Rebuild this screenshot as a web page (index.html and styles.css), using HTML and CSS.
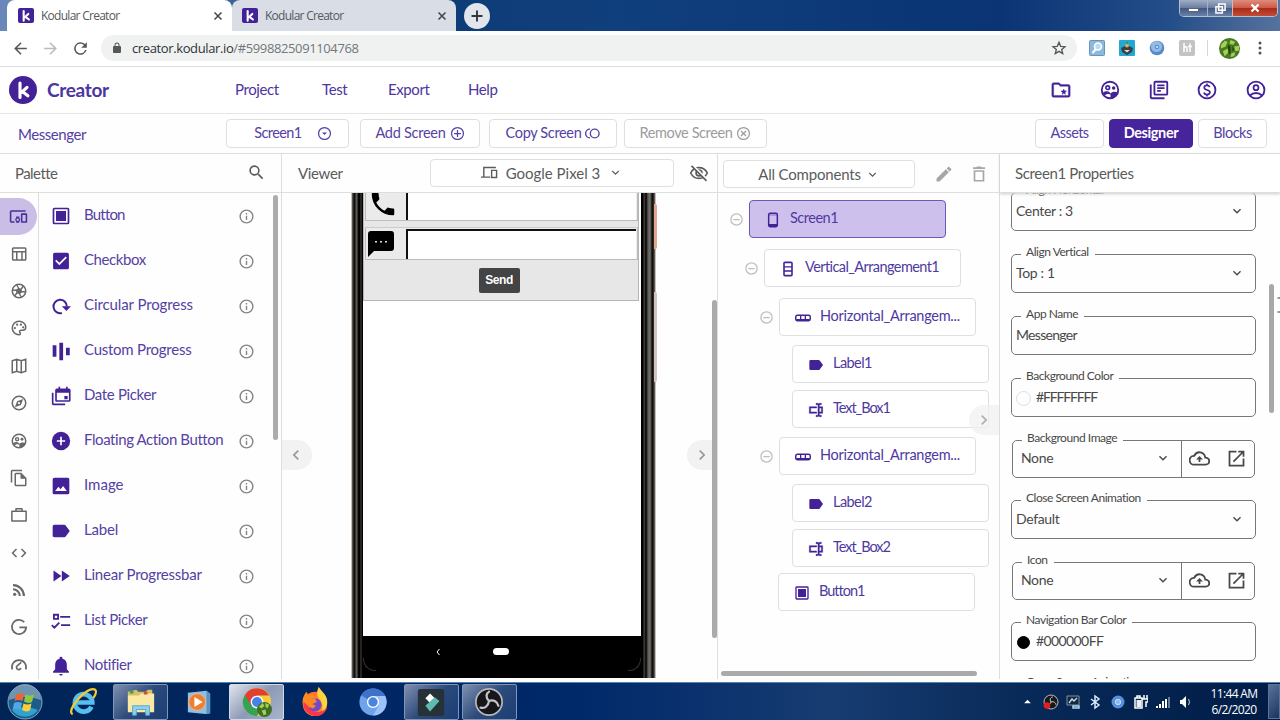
FILE: index.html
```html
<!DOCTYPE html>
<html lang="en">
<head>
<meta charset="utf-8">
<title>Kodular Creator</title>
<link rel="stylesheet" href="styles.css">
</head>
<body>
<svg class="defs" aria-hidden="true">
  <symbol id="k" viewBox="0 0 24 24"><path d="M8 3.500V20M16 8.500L10 14M11 13.500l6 4.500" fill="none" stroke="#fff" stroke-width="3.600" stroke-linecap="round"/></symbol>
  <symbol id="info" viewBox="0 0 24 24"><path d="M11 7h2v2h-2zm0 4h2v6h-2zm1-9a10 10 0 100 20 10 10 0 000-20zm0 18a8 8 0 110-16 8 8 0 010 16z"/></symbol>
  <symbol id="chev" viewBox="0 0 24 24"><path d="M7.400 8.600L12 13.200l4.600-4.600L18 10l-6 6-6-6z"/></symbol>
  <symbol id="right" viewBox="0 0 24 24"><path d="M8.600 16.600l4.600-4.600-4.600-4.600L10 6l6 6-6 6z"/></symbol>
  <symbol id="left" viewBox="0 0 24 24"><path d="M15.400 16.600L10.800 12l4.600-4.600L14 6l-6 6 6 6z"/></symbol>
  <symbol id="minus" viewBox="0 0 24 24"><path d="M7 11h10v2H7zm5-9a10 10 0 100 20 10 10 0 000-20zm0 18a8 8 0 110-16 8 8 0 010 16z"/></symbol>
  <symbol id="button" viewBox="0 0 24 24"><path d="M6 6h12v12H6z"/><rect x="3" y="3" width="18" height="18" rx="1" fill="none" stroke="currentColor" stroke-width="2"/></symbol>
  <symbol id="label" viewBox="0 0 24 24"><path d="M17.600 5.300A2 2 0 0016 4.500H4a2 2 0 00-2 2v11c0 1.100.9 2 2 2h12c.7 0 1.300-.3 1.600-.8L22.500 12z"/></symbol>
  <symbol id="textbox" viewBox="0 0 24 24"><path d="M17 7h5v10h-5v2a1 1 0 001 1h2v2h-2.500c-.5 0-1.500-.5-1.500-1 0 .5-1 1-1.500 1H12v-2h2a1 1 0 001-1V5a1 1 0 00-1-1h-2V2h2.500c.5 0 1.500.5 1.500 1 0-.5 1-1 1.500-1H20v2h-2a1 1 0 00-1 1zM2 7h11v2H4v6h9v2H2zm18 8V9h-3v6z" stroke="currentColor" stroke-width=".7"/></symbol>
  <symbol id="group" viewBox="0 0 24 24"><circle cx="12" cy="12" r="9" fill="none" stroke="currentColor" stroke-width="2"/><circle cx="9.500" cy="9.500" r="2" fill="none" stroke="currentColor" stroke-width="1.800"/><circle cx="16" cy="9.700" r="1.900"/><path d="M4 15c3-2 6-2 7.500-.5l1 1.300C14.500 13.500 18 13.500 21 15c-2 4-5 6-8.500 6v-4c-2-1.500-5-.5-6.500.8z"/></symbol>
  <symbol id="cloud" viewBox="0 0 24 24"><path d="M19.400 10A7.500 7.500 0 005.300 8 6 6 0 006 20h13a5 5 0 00.4-10zM19 18H6a4 4 0 01-.4-8h1l.5-.9A5.500 5.500 0 0117.400 10.400l.3 1.500 1.500.1A3 3 0 0119 18zM8 13h3v3h2v-3h3l-4-4z"/></symbol>
  <symbol id="open" viewBox="0 0 24 24"><path d="M19 19H5V5h7V3H3v18h18v-9h-2zM14 3v2h3.600l-9.800 9.800 1.400 1.400L19 6.400V10h2V3z"/></symbol>
  <symbol id="harr" viewBox="0 0 24 24"><rect x="1.100" y="8" width="21.800" height="8" rx="2.500" fill="none" stroke="currentColor" stroke-width="2.200"/><path d="M7.500 8h2v8h-2zM14.500 8h2v8h-2zM2 13.500h20v2H2z"/></symbol>
  <symbol id="varr" viewBox="0 0 24 24"><rect x="6" y="2" width="12" height="20" rx="1.500" fill="none" stroke="currentColor" stroke-width="2.400"/><path d="M6 7.700h12v2.200H6zM6 14h12v2.200H6z"/></symbol>
</svg>

<header class="tabs">
  <div class="tab active"><span class="klogo"><svg><use href="#k"/></svg></span><span class="tab-title">Kodular Creator</span><svg class="x" viewBox="0 0 10 10"><path d="M1.500 1.500l7 7m0-7l-7 7"/></svg></div>
  <div class="tab"><span class="klogo"><svg><use href="#k"/></svg></span><span class="tab-title">Kodular Creator</span><svg class="x" viewBox="0 0 10 10"><path d="M1.500 1.500l7 7m0-7l-7 7"/></svg></div>
  <span class="newtab"><svg viewBox="0 0 14 14"><path d="M7 1.500v11M1.500 7h11"/></svg></span>
  <div class="winctl">
    <span class="wc min"><i></i></span><span class="wc max"><svg viewBox="0 0 12 12"><path d="M4 1h7v7H4zM1 4h7v7H1z" fill="#687490" stroke="#fff" stroke-width="1.600"/></svg></span><span class="wc close"><svg viewBox="0 0 10 10"><path d="M1.500 1.500l7 7m0-7l-7 7" stroke="#fff" stroke-width="2.400"/></svg></span>
  </div>
</header>

<nav class="address">
  <svg class="nav" viewBox="0 0 24 24"><path d="M20 11H7.800l5.600-5.600L12 4l-8 8 8 8 1.400-1.400L7.800 13H20z"/></svg>
  <svg class="nav dim" viewBox="0 0 24 24"><path d="M4 11h12.200l-5.600-5.600L12 4l8 8-8 8-1.400-1.400 5.600-5.600H4z"/></svg>
  <svg class="nav" viewBox="0 0 24 24"><path d="M17.650 6.350A8 8 0 1019.730 14h-2.080A6 6 0 1112 6c1.660 0 3.140.69 4.220 1.780L13 11h7V4z"/></svg>
  <div class="url">
    <svg class="lock" viewBox="0 0 24 24"><path d="M18 8h-1V6A5 5 0 007 6v2H6a2 2 0 00-2 2v10c0 1.100.9 2 2 2h12a2 2 0 002-2V10a2 2 0 00-2-2zM9 6a3 3 0 016 0v2H9z"/></svg>
    <span class="addr">creator.kodular.io<em>/#5998825091104768</em></span>
    <svg class="star" viewBox="0 0 24 24"><path d="M12 3.500l2.500 6 6.500.5-5 4.200 1.600 6.300-5.600-3.400-5.600 3.400L8 14.200 3 10l6.500-.5z"/></svg>
  </div>
  <div class="exts">
    <svg class="ext" viewBox="0 0 16 16"><rect x=".5" y=".5" width="15" height="15" rx="1" fill="#8bb9dc" stroke="#6794b8"/><circle cx="9" cy="6.500" r="3.500" fill="#b9dcf3" stroke="#fff" stroke-width="1.600"/><path d="M6.500 9.500L3.500 13" stroke="#fff" stroke-width="2"/></svg>
    <svg class="ext" viewBox="0 0 16 16"><rect width="16" height="16" rx="1" fill="#20a9d2"/><path d="M2 8l4-2 2-4 2 4 4 2-1 4-5 3-5-3z" fill="#3b3f45"/><circle cx="8" cy="5.500" r="2" fill="#c9b36a"/><path d="M5 10h6l-3 2.500z" fill="#ddd"/></svg>
    <svg class="ext" viewBox="0 0 16 16"><circle cx="8" cy="8" r="7.300" fill="#588bca"/><circle cx="7.500" cy="6.500" r="5.500" fill="#94bae6"/><circle cx="8" cy="7" r="2.300" fill="#5d90cf"/><circle cx="8" cy="7" r="1.100" fill="#d7e8fa"/></svg>
    <svg class="ext" viewBox="0 0 16 16"><rect width="16" height="16" rx="2" fill="#c3c3c3"/><path d="M5 3v9M5 7.500q3-2 3 1V12M11 3.500V12M9 6.500h4" fill="none" stroke="#fff" stroke-width="1.500"/></svg>
  </div>
  <i class="sep"></i>
  <svg class="avatar" viewBox="0 0 22 22"><circle cx="11" cy="11" r="11" fill="#477b20"/><path d="M2 7l4-4 3 1-2 5-5 2zM12 2l5 2-2 3-4-1zM16 9l5-1v5l-4 1zM4 14l5-3 1 4-4 4zM13 16l4-1-1 4-4 1z" fill="#a6ce58"/><path d="M9 7l3 2v8l-2-1zM14 8l2 4-2 2z" fill="#24460e"/></svg>
  <svg class="dots" viewBox="0 0 4 14"><circle cx="2" cy="2" r="1.500"/><circle cx="2" cy="7" r="1.500"/><circle cx="2" cy="12" r="1.500"/></svg>
</nav>

<header class="app">
  <span class="logo"><svg><use href="#k"/></svg></span>
  <h1>Creator</h1>
  <div class="menu"><a class="m1">Project</a><a class="m2">Test</a><a class="m3">Export</a><a>Help</a></div>
  <div class="appicons">
    <svg viewBox="0 0 24 24"><path d="M20 6h-8l-2-2H4a2 2 0 00-2 2v12c0 1.100.9 2 2 2h16a2 2 0 002-2V8a2 2 0 00-2-2zm0 12H4V6h5.200l2 2H20zm-6.900-1.200L15 15.600l1.900 1.200-.5-2.200 1.700-1.500-2.200-.2L15 11l-.9 1.900-2.200.2 1.700 1.500z" stroke="currentColor" stroke-width=".4"/></svg>
    <svg><use href="#group"/></svg>
    <svg viewBox="0 0 24 24"><path d="M4 6H2v14c0 1.100.9 2 2 2h14v-2H4zm16-4H8a2 2 0 00-2 2v12c0 1.100.9 2 2 2h12a2 2 0 002-2V4a2 2 0 00-2-2zm0 14H8V4h12zM10 9h8v2h-8zm0 3h4v2h-4zm0-6h8v2h-8z"/></svg>
    <svg viewBox="0 0 24 24"><circle cx="12" cy="12" r="9.200" fill="none" stroke="currentColor" stroke-width="2"/><path d="M15 8.800C14.500 7.600 13.400 7 12 7c-1.800 0-3 .9-3 2.300 0 3.600 6.200 1.700 6.200 5.200 0 1.500-1.300 2.500-3.200 2.500-1.700 0-3-.8-3.300-2.300M12 5v2m0 10v2" fill="none" stroke="currentColor" stroke-width="1.800"/></svg>
    <svg viewBox="0 0 24 24"><circle cx="12" cy="12" r="9.200" fill="none" stroke="currentColor" stroke-width="2"/><circle cx="12" cy="9.500" r="2.700" fill="none" stroke="currentColor" stroke-width="1.900"/><path d="M5.500 18c3.500-3.600 9.500-3.600 13 0" fill="none" stroke="currentColor" stroke-width="2"/></svg>
  </div>
</header>

<section class="toolbar">
  <span class="project">Messenger</span>
  <button class="btn b1">Screen1<svg viewBox="0 0 24 24"><circle cx="12" cy="12" r="9.500" fill="none" stroke="currentColor" stroke-width="2"/><path d="M8 10.500h8l-4 4z"/></svg></button>
  <button class="btn b2">Add Screen<svg viewBox="0 0 24 24"><path d="M12 6.500v11M6.500 12h11" stroke="currentColor" stroke-width="2"/><circle cx="12" cy="12" r="9.500" fill="none" stroke="currentColor" stroke-width="2"/></svg></button>
  <button class="btn b3">Copy Screen<svg viewBox="0 0 24 24"><circle cx="15.500" cy="12" r="7" fill="none" stroke="currentColor" stroke-width="2.200"/><path d="M8 5a7 7 0 000 14" fill="none" stroke="currentColor" stroke-width="2.200"/></svg></button>
  <button class="btn b4">Remove Screen<svg viewBox="0 0 24 24"><path d="M8 8l8 8m0-8l-8 8" stroke="currentColor" stroke-width="2"/><circle cx="12" cy="12" r="9.500" fill="none" stroke="currentColor" stroke-width="2"/></svg></button>
  <div class="modes"><button class="btn b5">Assets</button><button class="btn b6">Designer</button><button class="btn b7">Blocks</button></div>
</section>

<main>
  <section class="col palette">
    <div class="colhead"><span class="t-pal">Palette</span><svg class="search" viewBox="0 0 24 24"><path d="M15.500 14h-.8l-.3-.3a6.500 6.500 0 10-.7.7l.3.3v.8l5 5 1.500-1.500zm-6 0a4.500 4.500 0 110-9 4.500 4.500 0 010 9z"/></svg></div>
    <div class="colbody">
      <div class="rail">
        <span class="on"><svg viewBox="0 0 24 24"><path d="M3 6h18V4H3a2 2 0 00-2 2v12c0 1.100.9 2 2 2h4v-2H3zm10 6H9v1.800a3 3 0 000 4.400V20h4v-1.800a3 3 0 000-4.400zm-2 5.500a1.500 1.500 0 110-3 1.500 1.500 0 010 3zM22 8h-6c-.5 0-1 .5-1 1v10c0 .5.5 1 1 1h6c.5 0 1-.5 1-1V9c0-.5-.5-1-1-1zm-1 10h-4v-8h4z"/></svg></span>
        <span><svg viewBox="0 0 24 24"><path d="M20 3H4.500A2 2 0 002.500 5v14c0 1.100.9 2 2 2H20a2 2 0 002-2V5a2 2 0 00-2-2zm0 2v3H4.500V5zm-5 14h-5v-9h5zM4.500 10H8v9H4.500zM17 19v-9h3v9z"/></svg></span>
        <span><svg viewBox="0 0 24 24"><circle cx="12" cy="12" r="9" fill="none" stroke="currentColor" stroke-width="2"/><path d="M9 4l4 7M18 5l-5 7M21 13h-8M15 20l-4-7M6 19l5-7M3 11h8" stroke="currentColor" stroke-width="1.800"/><circle cx="12" cy="12" r="3.800"/></svg></span>
        <span><svg viewBox="0 0 24 24"><path d="M12 3a9 9 0 000 18c2 0 2.200-1.700 1.400-2.700C12 16.500 13 15 15 15h2a4 4 0 004-4c0-4.500-4-8-9-8z" fill="none" stroke="currentColor" stroke-width="2"/><circle cx="6.500" cy="12" r="1.500"/><circle cx="9.500" cy="7.500" r="1.500"/><circle cx="14.500" cy="7.500" r="1.500"/><circle cx="17.500" cy="11" r="1.500"/></svg></span>
        <span><svg viewBox="0 0 24 24"><path d="M3 5l6-2 6 2 6-2v16l-6 2-6-2-6 2zM9 3v16m6-14v16" fill="none" stroke="currentColor" stroke-width="2"/></svg></span>
        <span><svg viewBox="0 0 24 24"><circle cx="12" cy="12" r="9" fill="none" stroke="currentColor" stroke-width="2"/><path d="M17.500 6.500l-3 8-8 3 3-8zM12 10.500a1.500 1.500 0 100 3 1.500 1.500 0 000-3z" fill-rule="evenodd"/></svg></span>
        <span><svg><use href="#group"/></svg></span>
        <span><svg viewBox="0 0 24 24"><path d="M16 1H3a2 2 0 00-2 2v15h2V3h13zM15 5H8a2 2 0 00-2 2v14c0 1.100.9 2 2 2h12a2 2 0 002-2V12zm5 16H8V7h6v6h6z"/></svg></span>
        <span><svg viewBox="0 0 24 24"><path d="M2.500 7h19v13h-19zM8 7V3.500h8V7" fill="none" stroke="currentColor" stroke-width="2" stroke-linejoin="round"/></svg></span>
        <span><svg viewBox="0 0 24 24"><path d="M9.400 16.600L4.800 12l4.600-4.600L8 6l-6 6 6 6zm5.200 0l4.600-4.600-4.600-4.600L16 6l6 6-6 6z"/></svg></span>
        <span><svg viewBox="0 0 24 24"><circle cx="6.200" cy="17.800" r="2.200"/><path d="M4 5.500A14.500 14.500 0 0118.500 20M4 11a9 9 0 019 9" fill="none" stroke="currentColor" stroke-width="2.800"/></svg></span>
        <span><svg viewBox="0 0 24 24"><path d="M19 5.500A9.500 9.500 0 1021.500 12.500h-9" fill="none" stroke="currentColor" stroke-width="2.300"/></svg></span>
        <span><svg viewBox="0 0 24 24"><path d="M3 18A9.500 9.500 0 1121 18M15 8.500L9.500 13a3 3 0 105 3" fill="none" stroke="currentColor" stroke-width="2.200"/></svg></span>
      </div>
      <div class="items">
        <div class="item"><svg class="ic"><use href="#button"/></svg><span class="p1">Button</span><svg class="inf"><use href="#info"/></svg></div>
        <div class="item"><svg class="ic" viewBox="0 0 24 24"><path d="M19.500 2h-15A2 2 0 002.500 4v16c0 1.100.9 2 2 2h15a2 2 0 002-2V4a2 2 0 00-2-2zM10 17l-5-5 1.400-1.400L10 14.200l7.600-7.600L19 8z"/></svg><span class="p2">Checkbox</span><svg class="inf"><use href="#info"/></svg></div>
        <div class="item"><svg class="ic" viewBox="0 0 24 24"><path d="M13 20.300a8 8 0 116-7.800" fill="none" stroke="currentColor" stroke-width="2.400"/><path d="M13 12.300h11L18.500 18z"/></svg><span class="p3">Circular Progress</span><svg class="inf"><use href="#info"/></svg></div>
        <div class="item"><svg class="ic" viewBox="0 0 24 24"><path d="M2 5h4.500v14H2zM10 2h4.500v21H10zM18 8h4.500v9H18z"/></svg><span class="p4">Custom Progress</span><svg class="inf"><use href="#info"/></svg></div>
        <div class="item"><svg class="ic big" viewBox="0 0 24 24"><path d="M21.500 3H20V1h-2v2h-7V1H9v2H7a2 2 0 00-2 2v12c0 1.100.9 2 2 2h14.500a2 2 0 002-2V5a2 2 0 00-2-2zm0 14H7V8h14.500zM16 12h4v4h-4zM3 8H1v13c0 1.100.9 2 2 2h14v-2H3z"/></svg><span class="p5">Date Picker</span><svg class="inf"><use href="#info"/></svg></div>
        <div class="item"><svg class="ic" viewBox="0 0 24 24"><path d="M12 1a11 11 0 100 22 11 11 0 000-22zm5 12h-4v4h-2v-4H7v-2h4V7h2v4h4z"/></svg><span class="p6">Floating Action Button</span><svg class="inf"><use href="#info"/></svg></div>
        <div class="item"><svg class="ic" viewBox="0 0 24 24"><path d="M22 20V4a2 2 0 00-2-2H4a2 2 0 00-2 2v16c0 1.100.9 2 2 2h16a2 2 0 002-2zM9 13l2.500 3 3-4 4.500 6H5z"/></svg><span class="p7">Image</span><svg class="inf"><use href="#info"/></svg></div>
        <div class="item"><svg class="ic"><use href="#label"/></svg><span class="p8">Label</span><svg class="inf"><use href="#info"/></svg></div>
        <div class="item"><svg class="ic" viewBox="0 0 24 24"><path d="M3 5.500l9.500 6.500L3 18.500zM13 5.500l9.500 6.500-9.500 6.500z"/></svg><span class="p9">Linear Progressbar</span><svg class="inf"><use href="#info"/></svg></div>
        <div class="item"><svg class="ic" viewBox="0 0 24 24"><path d="M3.500 4.500h5v5h-5zM11 7h12M12 17h11M1 17l3 3 6-6" fill="none" stroke="currentColor" stroke-width="2.200"/></svg><span class="p10">List Picker</span><svg class="inf"><use href="#info"/></svg></div>
        <div class="item"><svg class="ic" viewBox="0 0 24 24"><path d="M12 23.500c1.100 0 2-.9 2-2h-4c0 1.100.9 2 2 2zM19 16v-6c0-3.500-2-6-5.300-6.800V2.500a1.700 1.700 0 00-3.400 0v.7C7 4 5 6.500 5 10v6l-2.500 2.500V20h19v-1.500z"/></svg><span class="p11">Notifier</span><svg class="inf"><use href="#info"/></svg></div>
      </div>
      <i class="sb"></i>
    </div>
  </section>

  <section class="col viewer">
    <div class="colhead"><span class="t-view">Viewer</span>
      <div class="select device"><svg class="dev" viewBox="0 0 24 24"><path d="M4 18V5h17M0 18.500h13M15 9h7v10h-7z" fill="none" stroke="currentColor" stroke-width="2"/></svg><span>Google Pixel 3</span><svg class="cv"><use href="#chev"/></svg></div>
      <svg class="eye" viewBox="0 0 24 24"><path d="M2 12c2-4 6-6.500 10-6.500S20 8 22 12c-2 4-6 6.500-10 6.500S4 16 2 12z" fill="none" stroke="currentColor" stroke-width="2"/><circle cx="12" cy="12" r="3.500" fill="none" stroke="currentColor" stroke-width="2"/><path d="M4 2.500l18 18" stroke="#fff" stroke-width="3"/><path d="M3 3.500l18 18" stroke="currentColor" stroke-width="2"/></svg>
    </div>
    <div class="stage">
      <div class="phone">
        <div class="display">
          <div class="form">
            <div class="hrow first"><svg class="call" viewBox="0 0 24 24"><path d="M6.600 10.800a15 15 0 006.600 6.600l2.200-2.200c.3-.3.7-.4 1-.2 1.100.4 2.300.6 3.600.6.600 0 1 .4 1 1V20c0 .6-.4 1-1 1A17 17 0 013 4c0-.6.4-1 1-1h3.500c.6 0 1 .4 1 1 0 1.200.2 2.400.6 3.600.1.300 0 .7-.3 1z"/></svg><div class="tb"></div></div>
            <div class="hrow second"><svg class="sms" viewBox="0 0 26 26"><path d="M3 0h20a3 3 0 013 3v14a3 3 0 01-3 3H6l-6 6V3a3 3 0 013-3z"/><path d="M7 10h2v1.500H7zM12 10h2v1.500h-2zM17 10h2v1.500h-2z" fill="#ddd"/></svg><div class="tb"></div></div>
            <span class="send">Send</span>
          </div>
          <div class="softnav"><svg viewBox="0 0 6 8"><path d="M4.500 1L2 4l2.500 3" fill="none" stroke="#fff"/></svg><i></i></div>
        </div>
      </div>
      <i class="power"></i><i class="volume"></i>
      <span class="handle hl"><svg><use href="#left"/></svg></span>
      <span class="handle hr"><svg><use href="#right"/></svg></span>
      <i class="vsb"></i>
    </div>
  </section>

  <section class="col tree">
    <div class="colhead"><div class="select comps"><span>All Components</span><svg class="cv"><use href="#chev"/></svg></div>
      <svg class="pen" viewBox="0 0 24 24"><path d="M2 18v4h4L18.500 9.500l-4-4zM4.500 19.500L14 10M21.500 6.500a1 1 0 000-1.400l-2.600-2.600a1 1 0 00-1.400 0l-2 2 4 4z"/></svg>
      <svg class="bin" viewBox="0 0 24 24"><path d="M6 8h12v13H6z" fill="none" stroke="currentColor" stroke-width="2.200"/><path d="M4 3h4.500l1-1h5l1 1H20v2.200H4z"/></svg></div>
    <div class="nodes">
      <div class="node n1"><svg class="tg"><use href="#minus"/></svg><div class="box sel"><svg viewBox="0 0 24 24"><rect x="5.500" y="2" width="13" height="20" rx="2" fill="none" stroke="currentColor" stroke-width="2.200"/><path d="M6 4h12v1H6zM6 18h12v4H6z"/></svg><span class="sc">Screen1</span></div></div>
      <div class="node n2"><svg class="tg"><use href="#minus"/></svg><div class="box"><svg><use href="#varr"/></svg><span class="va">Vertical_Arrangement1</span></div></div>
      <div class="node n3"><svg class="tg"><use href="#minus"/></svg><div class="box"><svg><use href="#harr"/></svg><span class="ha">Horizontal_Arrangem...</span></div></div>
      <div class="node n4"><div class="box"><svg><use href="#label"/></svg><span class="lb">Label1</span></div></div>
      <div class="node n5"><div class="box"><svg><use href="#textbox"/></svg><span class="tx">Text_Box1</span></div></div>
      <div class="node n6"><svg class="tg"><use href="#minus"/></svg><div class="box"><svg><use href="#harr"/></svg><span class="ha">Horizontal_Arrangem...</span></div></div>
      <div class="node n7"><div class="box"><svg><use href="#label"/></svg><span class="lb">Label2</span></div></div>
      <div class="node n8"><div class="box"><svg><use href="#textbox"/></svg><span class="tx">Text_Box2</span></div></div>
      <div class="node n9"><div class="box"><svg><use href="#button"/></svg><span class="bt">Button1</span></div></div>
      <i class="hsb"></i>
      <span class="handle ht"><svg><use href="#right"/></svg></span>
    </div>
  </section>

  <section class="col props">
    <div class="colhead"><span class="t-props">Screen1 Properties</span></div>
    <div class="fields">
      <fieldset><legend>Align Horizontal</legend><div class="val"><span>Center : 3</span><svg><use href="#chev"/></svg></div></fieldset>
      <fieldset><legend>Align Vertical</legend><div class="val"><span>Top : 1</span><svg><use href="#chev"/></svg></div></fieldset>
      <fieldset><legend>App Name</legend><div class="val"><span class="name">Messenger</span></div></fieldset>
      <fieldset><legend>Background Color</legend><div class="val"><i class="sw"></i><span class="hexf">#FFFFFFFF</span></div></fieldset>
      <fieldset class="asset"><legend>Background Image</legend><div class="val"><span>None</span><svg><use href="#chev"/></svg><div class="acts"><svg><use href="#cloud"/></svg><svg><use href="#open"/></svg></div></div></fieldset>
      <fieldset><legend>Close Screen Animation</legend><div class="val"><span>Default</span><svg><use href="#chev"/></svg></div></fieldset>
      <fieldset class="asset"><legend>Icon</legend><div class="val"><span>None</span><svg><use href="#chev"/></svg><div class="acts"><svg><use href="#cloud"/></svg><svg><use href="#open"/></svg></div></div></fieldset>
      <fieldset><legend>Navigation Bar Color</legend><div class="val"><i class="sw dark"></i><span class="hex0">#000000FF</span></div></fieldset>
      <fieldset class="last"><legend>Open Screen Animation</legend><div class="val"></div></fieldset>
      <i class="psb"></i>
      <svg class="cursor" viewBox="0 0 6 16"><path d="M3.500 1H6M3.500 15H6" stroke="#333"/></svg>
    </div>
  </section>
</main>

<footer class="taskbar">
  <svg class="start" viewBox="0 0 36 36"><circle cx="18" cy="18" r="17" fill="#1d5c8a" stroke="#7fa9c7"/><path d="M2 16a16 16 0 0132 0q-16-6-32 0z" fill="#88a7bd" opacity=".75"/><path d="M5 26a16 16 0 0026 0q-13-6-26 0z" fill="#35b5df" opacity=".8"/><path d="M9 11q4-3 8-1l-1.500 7q-4-2-8 0z" fill="#ee6534"/><path d="M18.500 10.500q4 2 8.500 0l-2 7.500q-4 2-8-.5z" fill="#91c83e"/><path d="M7 19q4-2 8 0l-1.500 7q-4-2-8 0z" fill="#4fa6ea"/><path d="M16.500 19.500q4 2 8 0l-1.500 7q-4 2-8-.5z" fill="#fccc3a"/></svg>
  <span class="task ie"><svg viewBox="0 0 32 32"><path d="M25 21a9.300 9.300 0 11.900-4.500H9" fill="none" stroke="#56bfee" stroke-width="5"/><path d="M5 29C-3 26 20-2 29 3c2 2 0 6-2 9" fill="none" stroke="#f1cb35" stroke-width="2.400"/></svg></span>
  <span class="task open explorer"><svg viewBox="0 0 32 32"><path d="M2 5l9-2 2 2h8l2-2h5v22H2z" fill="#d9bd67"/><path d="M2 9h12l2-2h14v20H2z" fill="#fae9a5"/><path d="M4 4h4v3H4z" fill="#3aa655"/><path d="M19 5h4v3h-4z" fill="#d05030"/><path d="M7 30V20h18v10h-4v-6H11v6z" fill="#8fd0ee" stroke="#5aa6cf"/></svg></span>
  <span class="task"><svg class="sm" viewBox="0 0 28 28"><path d="M2 4l20-2 4 3v21l-5 1-19-2z" fill="#8fc0e3"/><path d="M22 2l4 3v21l-4 1z" fill="#5a94c3"/><circle cx="12" cy="14" r="9" fill="#ef7f2d" stroke="#f3b487"/><path d="M9 8.500l9 5.500-9 5.500z" fill="#fff"/></svg></span>
  <span class="task cur"><svg viewBox="0 0 32 32"><circle cx="16" cy="16" r="15" fill="#f9cc3a"/><path d="M3 8.500A15 15 0 0016 31l6-11-6-4z" fill="#34a356"/><path d="M3 8.500L10 20l6-11h13A15 15 0 003 8.500z" fill="#df4032"/><circle cx="16" cy="16" r="6.800" fill="#fff"/><circle cx="16" cy="16" r="5.300" fill="#4384ec"/><circle cx="24" cy="24" r="8" fill="#406f24"/><path d="M18 21l4-4 2 3-3 3zM25 17l4 2-2 4-2-2zM21 25l4-1 1 5-3 1z" fill="#a4ce5b"/></svg></span>
  <span class="task"><svg viewBox="0 0 32 32"><circle cx="16" cy="18" r="13" fill="#ff7139"/><path d="M3 18C2 12 5 7 7 5l2 4 5-2 2 5 4-12c2 4 8 7 9 15 0 9-6 16-13 16S4 26 3 18z" fill="#ff8a20"/><path d="M20 0c3 6 9 8 9 16 0 6-3 9-6 11 2-6 1-11-3-15-2-4-2-8 0-12z" fill="#ffd43e"/><path d="M4 16c-2 6 4 15 13 15 6 0 10-4 12-9-5 5-10 5-14 4z" fill="#fb364c"/><circle cx="16" cy="19" r="7" fill="#7548cb"/><path d="M8 14l8-2 2 4-5 2 4 2-3 3-5-2z" fill="#ff8a20"/></svg></span>
  <span class="task"><svg viewBox="0 0 32 32"><circle cx="16" cy="16" r="14.500" fill="#6ea4ed"/><path d="M16 16L3.500 9A14.500 14.500 0 0129 9.500H16z" fill="#3f73cb"/><path d="M16 30.500A14.500 14.500 0 0029 9.500H18L22 20z" fill="#9cc2f8"/><circle cx="16" cy="16" r="6.500" fill="#fff"/><circle cx="16" cy="16" r="5" fill="#4c83dc"/></svg></span>
  <span class="task open film"><svg viewBox="0 0 32 32"><rect x="2" y="2" width="28" height="29" rx="3" fill="#263238"/><path d="M15 7l5 5-5 5-5-5z" fill="#fff"/><path d="M10 20l10-9 5 4-10 11z" fill="#5ebbb0"/></svg></span>
  <span class="task open obs"><svg viewBox="0 0 32 32"><circle cx="16" cy="16" r="14" fill="#17171b" stroke="#b8b8bd" stroke-width="1.800"/><path d="M16 15C12 11 13 7 16 5M16 15c5-2 9 1 10 5M16 15c-1 6-5 8-9 7" fill="none" stroke="#c4c4ca" stroke-width="2.400" stroke-linecap="round"/></svg></span>
  <div class="tray">
    <svg class="up" viewBox="0 0 8 6"><path d="M4 1l4 4H0z" fill="#fff"/></svg>
    <svg viewBox="0 0 16 16"><circle cx="8" cy="8" r="7" fill="#18181a" stroke="#bbb"/><path d="M8 8c-2-3 0-5 2-5M8 8c3-1 5 1 5 3M8 8c-1 3-3 3-5 2" fill="none" stroke="#ccc"/><circle cx="4" cy="11.500" r="3.300" fill="#e11e20"/></svg>
    <svg viewBox="0 0 16 16"><path d="M2 2h12v9H2z" fill="#182639" stroke="#7e91a8"/><path d="M4 9l3-4 2 2 3-3M8 12h6v2H8z" fill="none" stroke="#b5d7ee" stroke-width="1.500"/></svg>
    <svg viewBox="0 0 16 16"><path d="M4 5l8 6-4 3V2l4 3-8 6" fill="none" stroke="#d9ecff" stroke-width="1.500"/></svg>
    <svg viewBox="0 0 16 16"><circle cx="8" cy="8" r="6.500" fill="#5790dc"/><circle cx="8" cy="8" r="2.700" fill="#8fbaf0" stroke="#c7ddf7"/></svg>
    <svg viewBox="0 0 16 16"><path d="M3 4h7v10H3zM5 2h3v2H5zM12 1v4m3-4v4m-5 0h6v3h-2v5" fill="none" stroke="#fff" stroke-width="1.500"/><path d="M4.500 6H9v7H4.500z" fill="#eee"/></svg>
    <svg viewBox="0 0 16 16"><path d="M1 12h2v2H1zM4 10h2v4H4zM7 7h2v7H7zM10 5h2v9h-2z" fill="#fff"/><path d="M13 3h2v11h-2z" fill="#667995"/></svg>
    <svg class="vol" viewBox="0 0 16 16"><path d="M3 6h2l4-4v12l-4-4H3z" fill="#fff"/><path d="M11.500 5q2 3 0 6" fill="none" stroke="#ccd"/></svg>
  </div>
  <div class="clock"><span>11:44 AM</span><span class="date">6/2/2020</span></div>
  <i class="showdesk"></i>
</footer>
</body>
</html>
```
FILE: styles.css
```css
* { box-sizing: border-box; }
body { margin: 0; width: 1280px; height: 720px; overflow: hidden; display: flex; flex-direction: column; background: #fefefe; font: 15px/20px Lato, sans-serif; color: #5b5b5b; }
svg { display: block; fill: currentColor; flex: none; }
.defs { position: absolute; width: 0; height: 0; }
button { font: inherit; margin: 0; padding: 0; }

.tabs { height: 31px; flex: none; display: flex; padding-left: 7px; background: linear-gradient(90deg, #6988b9 0, #6988b9 20px, #0e3c77 450px, #103f7d 620px, #0a3474 1000px, #244e89 1170px, #56729e 1280px); }
.tab { width: 225px; height: 31px; display: flex; align-items: center; padding-left: 11px; background: #d9dde6; border-radius: 8px 8px 0 0; }
.tab + .tab { width: 224px; padding-left: 10px; }
.tab.active { background: #fff; }
.klogo { width: 16px; height: 15px; background: #432298; border-radius: 2px; display: grid; place-items: center; }
.klogo svg { width: 14px; height: 14px; }
.tab-title { margin-left: 7px; width: 172px; font: 12px/16px "Open Sans", sans-serif; letter-spacing: -.73px; color: #55585d; }
.x { width: 10px; height: 10px; stroke: #414449; stroke-width: 1.500; }
.newtab { width: 26px; height: 26px; border-radius: 50%; background: #e2e5eb; margin: 3px 0 0 8px; display: grid; place-items: center; }
.newtab svg { width: 14px; height: 14px; stroke: #33373d; stroke-width: 1.900; }
.winctl { margin-left: auto; margin-right: 2px; height: 17px; display: flex; border: 1px solid #b4bfd2; border-top: 0; border-radius: 0 0 5px 5px; overflow: hidden; }
.wc { display: grid; place-items: center; height: 16px; width: 27px; background: linear-gradient(#a0adc3, #687ca0 50%, #405783 51%, #6a80a5); }
.wc.max { width: 25px; border-left: 1px solid #a4b0c6; }
.wc.max svg { width: 11px; height: 11px; }
.wc.close { width: 45px; border-left: 1px solid #d8b7b4; background: linear-gradient(#dc8d7c, #cd5843 50%, #a92a19 51%, #c44c35); }
.wc.close svg { width: 10px; height: 10px; }
.min i { width: 11px; height: 4px; background: #fff; border: 1px solid #59647a; margin-top: 3px; }

.address { height: 36px; flex: none; background: #fff; border-bottom: 1px solid #dcdedf; display: flex; align-items: center; padding: 0 0 1px 11px; }
.nav { width: 19px; height: 19px; margin-right: 11px; color: #55585b; }
.dim { color: #b9bbbd; }
.url { width: 976px; height: 26px; border-radius: 13px; background: #f0f2f2; display: flex; align-items: center; padding: 0 10px 0 10px; }
.lock { width: 12px; height: 12px; color: #55585b; }
.addr { margin-left: 9px; flex: 1; font: 13px/20px "Open Sans", sans-serif; letter-spacing: -.38px; color: #2e3235; }
.addr em { font-style: normal; color: #73777b; }
.star { width: 16px; height: 16px; fill: none; stroke: #54575a; stroke-width: 2; }
.exts { display: flex; gap: 14px; margin-left: 12px; }
.ext { width: 16px; height: 16px; }
.sep { width: 1px; height: 16px; background: #d5d7d8; margin-left: 12px; }
.avatar { width: 21px; height: 21px; margin-left: 11px; }
.dots { width: 4px; height: 14px; margin-left: 18px; color: #505356; }

.app { height: 47px; flex: none; background: #fff; border-bottom: 1px solid #e5e5e5; display: flex; align-items: center; padding: 0 13px 0 9px; color: #4c35a0; }
.logo { width: 28px; height: 28px; border-radius: 50%; background: #432298; display: grid; place-items: center; }
.logo svg { width: 21px; height: 21px; }
h1 { margin: 0 0 0 10px; width: 188px; font: 700 19px/24px Lato, sans-serif; letter-spacing: -.3px; }
.menu { display: flex; height: 22px; font-size: 15px; letter-spacing: -.4px; flex: 1; }
.m1 { width: 87px; } .m2 { width: 66px; } .m3 { width: 80px; }
.appicons { display: flex; gap: 26.700px; color: #432298; }
.appicons svg { width: 22px; height: 22px; }

.toolbar { height: 40px; flex: none; display: flex; align-items: center; border-bottom: 1px solid #dedede; padding: 0 13px 0 18px; color: #5440a5; }
.project { width: 208px; letter-spacing: -.45px; }
.btn { height: 29px; display: flex; align-items: center; justify-content: center; gap: 4px; border: 1px solid #dfdfe2; border-radius: 4px; background: #fff; color: #5541a4; font-size: 14.500px; letter-spacing: -.25px; padding-bottom: 1px; white-space: nowrap; }
.btn svg { width: 15px; height: 15px; }
.b1 { width: 123px; gap: 15px; padding-left: 11px; letter-spacing: -.6px; }
.b2 { width: 120px; margin-left: 11px; }
.b3 { width: 128px; margin-left: 9px; letter-spacing: -.35px; }
.b4 { width: 143px; margin-left: 7px; color: #9c9c9c; letter-spacing: -.4px; }
.modes { margin-left: auto; display: flex; gap: 5px; }
.b5 { width: 69px; letter-spacing: -.6px; } .b6 { width: 84px; background: #46249b; border-color: #46249b; color: #fff; font-weight: 700; letter-spacing: -.4px; } .b7 { width: 69px; letter-spacing: -.5px; }

main { display: flex; height: 525px; flex: none; }
.col { height: 525px; border-right: 1px solid #dedede; display: flex; flex-direction: column; flex: none; }
.palette { width: 282px; } .viewer { width: 436px; } .tree { width: 282px; } .props { width: 280px; border: 0; }
.colhead { height: 39px; flex: none; display: flex; align-items: center; border-bottom: 1px solid #dedede; padding: 0 0 1px 15px; }
.colbody { display: flex; height: 486px; overflow: hidden; }
.search { width: 19px; height: 19px; margin-left: 192px; }
.t-pal { width: 40px; white-space: nowrap; letter-spacing: -.55px; }
.rail { width: 39px; border-right: 1px solid #dedede; padding-top: 4.500px; color: #686868; }
.rail span { display: flex; height: 37.400px; align-items: center; padding-left: 10px; }
.rail svg { width: 18px; height: 18px; }
.rail .on { background: #cabde6; width: 37px; border-radius: 0 19px 19px 0; color: #4b319d; padding-left: 9px; }
.rail .on svg { width: 19px; height: 19px; }
.items { width: 233px; color: #5541a4; }
.item { height: 45px; display: flex; align-items: center; padding-left: 12px; }
.item span { width: 154px; margin: -3px 0 0 13px; white-space: nowrap; }
.p1 { letter-spacing: -.8px; } .p2 { letter-spacing: -.4px; } .p3 { letter-spacing: -.1px; } .p4 { letter-spacing: -.25px; }
.p5 { letter-spacing: -.35px; } .p6 { letter-spacing: -.42px; } .p8 { letter-spacing: -.2px; } .p9 { letter-spacing: -.22px; }
.p10 { letter-spacing: -.36px; } .p11 { letter-spacing: -.4px; }
.ic { width: 20px; height: 20px; color: #432298; margin-top: 1px; }
.inf { width: 17px; height: 17px; color: #858585; margin-top: 1px; }
.sb { width: 5px; height: 245px; background: #acacac; border-radius: 3px; margin: 2px 0 0 1px; }

.viewer .colhead { padding-left: 16px; }
.t-view { width: 132px; letter-spacing: -.35px; }
.select { height: 28px; border: 1px solid #dfdfdf; border-radius: 4px; display: flex; align-items: center; justify-content: center; background: #fff; }
.device { width: 244px; gap: 8px; }
.dev { width: 17px; height: 17px; }
.cv { width: 15px; height: 15px; }
.eye { width: 20px; height: 20px; margin-left: 15px; }
.stage { position: relative; height: 486px; overflow: hidden; padding-left: 69px; }
.phone { width: 305px; height: 485px; padding: 0 14px 0 11px; border-left: 1px solid #c9beb3; border-right: 1px solid #c9beb3; background: linear-gradient(90deg, #6c6861 0, #111 2px, #111 3px, #55534f 4px, #66635e 5px, #080808 6px, #000 8px, #4a4845 9px, #000 10px, #000 291px, #4a4845 292px, #000 294px, #5d5a56 296px, #77746e 298px, #111 300px, #111 301px, #aaa099 304px); }
.display { width: 278px; height: 485px; background: #fff; display: flex; flex-direction: column; }
.form { width: 276px; height: 108px; background: #e7e7e7; border: 1px solid #b5b5b5; border-top: 0; display: flex; flex-direction: column; align-items: center; }
.hrow { width: 273px; border: 1px solid #bcbcbc; border-top-color: #ccc; display: flex; color: #000; background: #ebebeb; }
.first { height: 28px; border-top: 0; }
.second { height: 33px; margin-top: 6px; padding-top: 1px; }
.call { width: 30px; height: 30px; margin: -4px 8px 0 2px; }
.sms { width: 26px; height: 26px; margin: 2px 12px 0 2px; }
.tb { height: 30px; width: 230px; background: #fff; border-left: 2px solid #111; }
.first .tb { height: 27px; }
.second .tb { border-top: 2px solid #111; height: 30px; }
.send { width: 41px; height: 25px; margin: 8px 4px 0 0; border-radius: 2px; background: #444444; color: #fff; font: 700 12px/25px "Liberation Sans", sans-serif; letter-spacing: -.45px; text-align: center; }
.softnav { margin-top: auto; height: 42px; background: #000; display: flex; padding-top: 12px; }
.softnav::before, .softnav::after { content: ""; width: 12px; height: 12px; margin-top: 10px; border-bottom: 1px solid #333; }
.softnav::before { border-left: 1px solid #333; border-radius: 0 0 0 12px; }
.softnav::after { border-right: 1px solid #333; border-radius: 0 0 12px; margin-left: auto; }
.softnav svg { width: 6px; height: 8px; margin-left: 59px; }
.softnav i { width: 16px; height: 7px; border-radius: 4px; background: #fff; margin-left: 52px; }
.power, .volume { position: absolute; left: 372px; width: 3px; border-radius: 0 2px 2px 0; }
.power { top: 11px; height: 45px; background: #e2a58e; }
.volume { top: 99px; height: 90px; background: #d2c3c0; }
.handle { position: absolute; display: flex; align-items: center; justify-content: center; width: 30px; height: 30px; background: #f1f1f1; color: #8d8d8d; opacity: .9; }
.handle svg { width: 20px; height: 20px; }
.hl { left: 0; top: 247px; border-radius: 0 15px 15px 0; padding-right: 2px; }
.hr { left: 405px; top: 247px; border-radius: 15px 0 0 15px; }
.vsb { position: absolute; right: 0; top: 107px; width: 5px; height: 338px; border-radius: 3px; background: #aaa; }

.tree .colhead { padding-left: 5px; }
.comps { width: 192px; margin-top: 3px; gap: 4px; letter-spacing: -.18px; }
.pen, .bin { width: 18px; height: 18px; color: #a6a6a6; margin: 2px 0 0 20px; }
.bin { margin-left: 17px; }
.nodes { position: relative; height: 486px; padding-top: 7px; color: #4e39a1; font-size: 14.500px; }
.node { display: flex; align-items: center; }
.tg { width: 15px; height: 15px; color: #bdbdbd; margin: 1px 5px 0 0; }
.box { width: 197px; height: 38px; border: 1px solid #dfdfe3; border-radius: 4px; background: #fff; display: flex; align-items: center; padding-left: 15px; white-space: nowrap; }
.box svg { width: 16px; height: 16px; color: #432298; margin-top: 2px; }
.box span { margin: -2px 0 0 9px; }
.sel { background: #cec0ed; border-color: #6e58b5; }
.sc { letter-spacing: -.5px; } .va { letter-spacing: -.58px; } .ha { letter-spacing: -.27px; } .lb { letter-spacing: -.55px; } .tx { letter-spacing: -1.050px; } .bt { letter-spacing: -1px; }
.n1 { padding-left: 11px; } .n2 { padding-left: 26px; margin-top: 11px; } .n3 { padding-left: 41px; margin-top: 11px; }
.n4 { padding-left: 74px; margin-top: 9px; } .n5 { padding-left: 74px; margin-top: 7px; } .n6 { padding-left: 41px; margin-top: 9px; }
.n7 { padding-left: 74px; margin-top: 9px; } .n8 { padding-left: 74px; margin-top: 7px; } .n9 { padding-left: 60px; margin-top: 6px; }
.hsb { position: absolute; left: 3px; bottom: 3px; width: 256px; height: 5px; border-radius: 3px; background: #aaa; }
.ht { right: 0; top: 212px; border-radius: 15px 0 0 15px; opacity: .7; }

.props .colhead { position: relative; z-index: 1; background: #fff; box-shadow: 0 1px 3px #ccc; }
.t-props { letter-spacing: -.35px; }
.fields { position: relative; height: 486px; overflow: hidden; padding-left: 11px; color: #484848; }
fieldset { margin: 0 0 15px; width: 245px; height: 47px; border: 1px solid #777; border-radius: 5px; padding: 0; min-width: 0; }
fieldset:first-child { margin-top: -9px; }
legend { margin-left: 9px; padding: 0 6px 4px 5px; font-size: 12px; line-height: 12px; height: 16px; letter-spacing: -.45px; white-space: nowrap; }
.val { margin-top: -8px; height: 37px; display: flex; align-items: center; padding-left: 4px; font-size: 14px; letter-spacing: -.35px; }
.val > span { flex: 1; }
.val > svg { width: 16px; height: 16px; margin-right: 10px; }
.val .name { letter-spacing: -.7px; }
.val .hexf { letter-spacing: -1.150px; }
.val .hex0 { letter-spacing: -.6px; }
.sw { width: 15px; height: 15px; border-radius: 50%; border: 1px solid #ddd; margin: 3px 5px 0 0; }
.dark { background: #000; border-color: #000; width: 13px; height: 13px; margin: 3px 6px 0 1px; }
.asset { height: 46px; margin: 0 0 14px 1px; width: 243px; }
.asset .val { padding-left: 8px; height: 36px; }
.acts { width: 73px; height: 37px; border-left: 1px solid #777; display: flex; align-items: center; gap: 16px; padding-left: 7px; }
.acts svg { width: 21px; height: 21px; }
.last { border-color: transparent; }
.psb { position: absolute; left: 269px; top: 91px; width: 5px; height: 129px; border-radius: 3px; background: #a8a8a8; }
.cursor { position: absolute; right: 0; top: 104px; width: 6px; height: 16px; }

.taskbar { margin-top: auto; height: 38px; display: flex; align-items: center; background: linear-gradient(90deg, #002456, #00296a 45%, #173c72 65%, #082a58 80%, #001c46); border-top: 1px solid #5484ae; }
.start { width: 36px; height: 36px; margin-left: 7px; }
.task { width: 55px; height: 36px; display: grid; place-items: center; margin-left: 3.100px; }
.task svg { width: 30px; height: 30px; }
.task .sm { width: 26px; height: 26px; }
.ie { margin-left: 12px; }
.open { border: 1px solid #8294b5; border-radius: 2px; background: linear-gradient(135deg, #8090b0, #2c4a7b 50%, #1b3e75); }
.cur { border: 1px solid #d1d9e7; border-radius: 2px; background: linear-gradient(135deg, #e1e4ec, #8c9ab7 50%, #a9b5cc); }
.tray { margin-left: auto; display: flex; align-items: center; gap: 6.400px; }
.tray svg { width: 16px; height: 16px; }
.tray .up { width: 7px; height: 5px; margin-right: 5px; }
.clock { width: 62px; margin-left: 8px; padding-left: 4px; display: flex; flex-direction: column; align-items: center; color: #fff; font: 12px/16px "Open Sans", sans-serif; letter-spacing: -.65px; }
.showdesk { width: 12px; height: 35px; margin-left: 5px; border: 1px solid #5c7397; background: linear-gradient(135deg, #5a7299, #1a3561); }
```
